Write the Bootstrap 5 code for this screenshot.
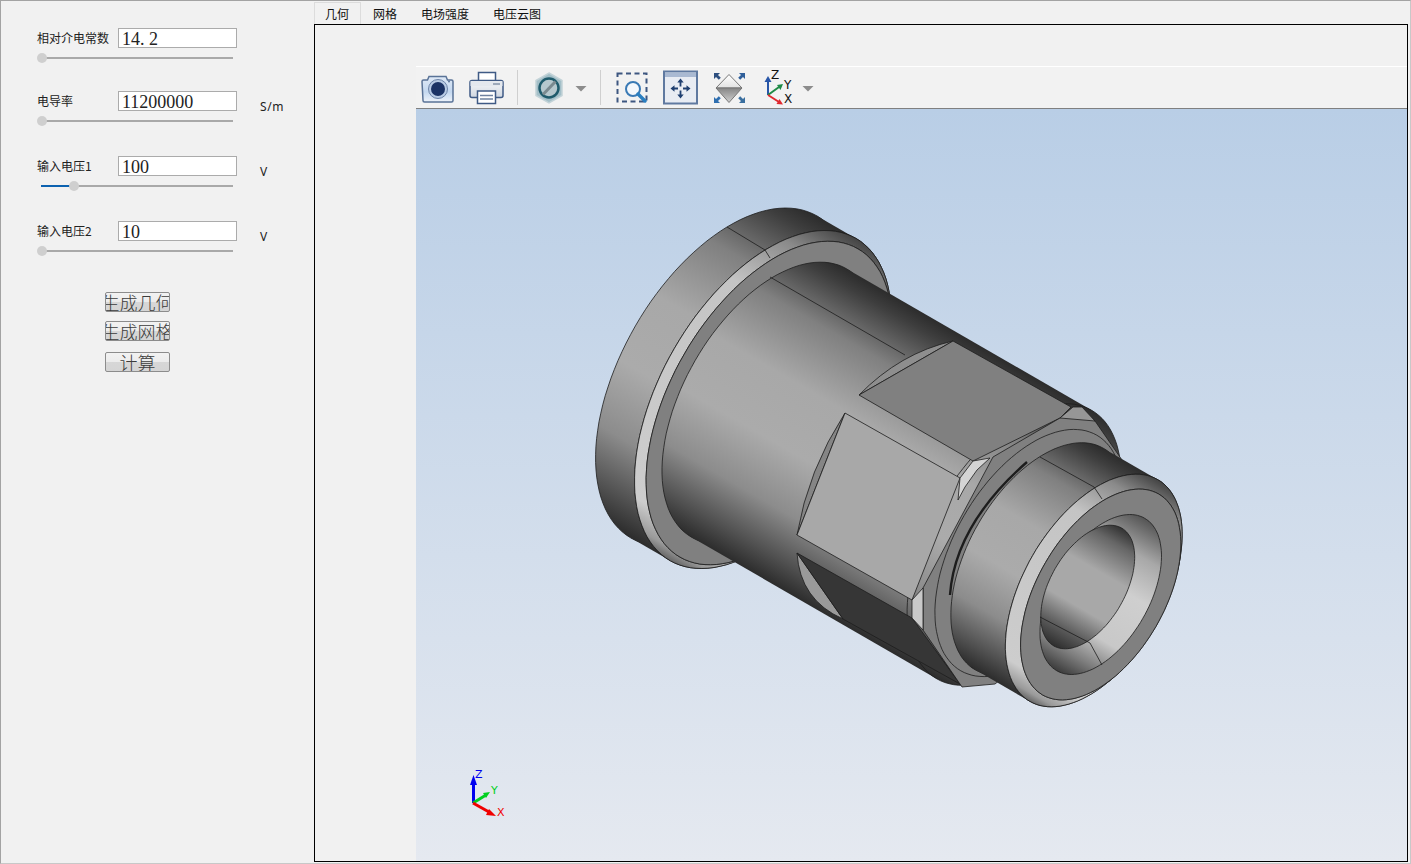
<!DOCTYPE html>
<html lang="zh">
<head>
  <meta charset="UTF-8" />
  <title>几何</title>
  <link href="https://cdn.jsdelivr.net/npm/bootstrap@5.3.3/dist/css/bootstrap.min.css" rel="stylesheet" />
  <style>
    html, body { height: 100%; }
    body { background: #f1f1f1; overflow: hidden; font-family: "Noto Sans CJK SC", "Liberation Sans", sans-serif; font-size: 12px; color: #222; }
    .app-frame { height: 864px; border: 1px solid #a3a3a3; border-bottom-color: #c8c8c8; border-right-color: #c8c8c8; }

    .side-panel { width: 313px; flex: none; padding: 27px 0 0 36px; }
    .param-group { width: 260px; height: 65px; }
    .param-group:first-child { height: 63px; }
    .param-row { height: 20px; }
    .param-label { width: 81px; flex: none; line-height: 20px; }
    .param-input.form-control { width: 119px; height: 20px; min-height: 0; flex: none; padding: 2px 3px 0; border: 1px solid #ababab; border-radius: 0; background: #fff; font-family: "Liberation Serif", serif; font-size: 18px; line-height: 18px; color: #222; }
    .param-unit { margin-left: 23px; padding-top: 9px; font-family: "Noto Sans", sans-serif; font-size: 12px; line-height: 14px; letter-spacing: .6px; }
    .param-slider { display: block; width: 196px; height: 10px; margin-top: 5px; padding: 0; appearance: none; -webkit-appearance: none; background: transparent; }
    .param-slider::-webkit-slider-runnable-track { height: 2px; background: linear-gradient(to right, transparent 4px, #0c62b0 4px, #0c62b0 var(--fill, 4px), #a9a9a9 var(--fill, 4px)); }
    .param-slider::-webkit-slider-thumb { appearance: none; -webkit-appearance: none; width: 10px; height: 10px; margin-top: -4px; border: 0; border-radius: 50%; background: #cfcfcf; box-shadow: none; }
    .action-list { width: 65px; margin: 6px 0 0 68px; }
    .action-btn.btn { display: block; width: 65px; height: 20px; padding: 0; overflow: hidden; white-space: nowrap; text-align: center; border: 1px solid #8c8c8c; border-radius: 2px; background: linear-gradient(#f2f2f2 0, #ececec 50%, #d7d7d7 50%, #d5d5d5 100%); font-family: "Noto Sans CJK SC", sans-serif; font-weight: 300; font-size: 18px; line-height: 17px; color: #3c3c3c; }
    .action-btn + .action-btn { margin-top: 9px; }
    .action-btn.btn.last-btn { margin-top: 11px; }
    .action-text { display: inline-block; margin-left: -5px; margin-right: -5px; }

    .tab-area { width: 1094px; flex: none; }
    .tab-strip.nav-tabs { height: 23px; flex-wrap: nowrap; border: 0; padding-top: 1px; }
    .tab-strip .nav-link { height: 22px; padding: 3px 12px 0; margin: 0; border: 0; border-radius: 0; background: transparent; color: #111; font-size: 12px; line-height: 18px; white-space: nowrap; }
    .tab-strip .nav-link.active { width: 47px; padding: 2px 0 0 10px; border: 1px solid #dcdcdc; border-bottom: 0; background: #f1f1f1; color: #111; }
    .tab-body { height: 838px; padding: 41px 0 0 101px; border: 1px solid #000; background: #f1f1f1; }

    .view-toolbar { height: 43px; padding-left: 4px; border-top: 1px solid #fff; border-bottom: 1px solid #808080; background: #f2f2f2; }
    .tb-btn { width: 36px; height: 36px; flex: none; }
    .tb-btn + .tb-btn { margin-left: 12px; }
    .tb-caret { width: 12px; height: 36px; flex: none; margin-left: 8px; }
    .tb-sep { width: 1px; height: 35px; flex: none; margin: 0 13px; background: #cfcfcf; }
    .view-canvas { height: 752px; background: linear-gradient(#b9cee6, #e5e9f0); }
    .view-canvas svg { display: block; }
    .axis-txt { font-family: "DejaVu Sans", sans-serif; font-size: 11px; }
    .axis-txt-lg { font-family: "DejaVu Sans", sans-serif; font-size: 12px; }
  </style>
</head>
<body>

<div class="app-frame d-flex">
  <aside class="side-panel">
    <div class="param-group">
      <div class="param-row d-flex">
        <label class="param-label">相对介电常数</label>
        <input class="param-input form-control" type="text" value="14. 2" />
      </div>
      <input class="param-slider" type="range" min="0" max="100" value="0" />
    </div>
    <div class="param-group">
      <div class="param-row d-flex">
        <label class="param-label">电导率</label>
        <input class="param-input form-control" type="text" value="11200000" />
        <span class="param-unit">S/m</span>
      </div>
      <input class="param-slider" type="range" min="0" max="100" value="0" />
    </div>
    <div class="param-group">
      <div class="param-row d-flex">
        <label class="param-label">输入电压1</label>
        <input class="param-input form-control" type="text" value="100" />
        <span class="param-unit">V</span>
      </div>
      <input class="param-slider" type="range" min="0" max="100" value="17" style="--fill: 33px" />
    </div>
    <div class="param-group">
      <div class="param-row d-flex">
        <label class="param-label">输入电压2</label>
        <input class="param-input form-control" type="text" value="10" />
        <span class="param-unit">V</span>
      </div>
      <input class="param-slider" type="range" min="0" max="100" value="0" />
    </div>
    <div class="action-list">
      <button class="action-btn btn" type="button"><span class="action-text">生成几何</span></button>
      <button class="action-btn btn" type="button"><span class="action-text">生成网格</span></button>
      <button class="action-btn btn last-btn" type="button"><span class="action-text">计算</span></button>
    </div>
  </aside>

  <main class="tab-area">
    <ul class="tab-strip nav nav-tabs">
      <li class="nav-item"><a class="nav-link active" href="#">几何</a></li>
      <li class="nav-item"><a class="nav-link" href="#">网格</a></li>
      <li class="nav-item"><a class="nav-link" href="#">电场强度</a></li>
      <li class="nav-item"><a class="nav-link" href="#">电压云图</a></li>
    </ul>
    <div class="tab-body">
      <div class="view-toolbar d-flex align-items-center">
        <!-- camera -->
        <svg class="tb-btn" viewBox="0 0 36 36">
          <defs>
            <linearGradient id="tbBlue" x1="0" y1="0" x2="0" y2="1"><stop offset="0" stop-color="#dfe9f6"/><stop offset=".6" stop-color="#c4d8f0"/><stop offset="1" stop-color="#eef3fa"/></linearGradient>
            <linearGradient id="tbGrey" x1="0" y1="0" x2="0" y2="1"><stop offset="0" stop-color="#f7f8fa"/><stop offset="1" stop-color="#cfd6e0"/></linearGradient>
          </defs>
          <path d="M2 11.500q0-1.500 1.500-1.500h4l1.500-3.500h17l1.500 3.500h4q1.500 0 1.500 1.500v19q0 1.500-1.500 1.500h-27q-1.500 0-1.500-1.500z" fill="url(#tbBlue)" stroke="#5a7397" stroke-width="1.500"/>
          <circle cx="18" cy="19" r="9.500" fill="#b9cbe4" stroke="#6d84a8"/>
          <circle cx="18" cy="19" r="7" fill="#1c3365"/>
          <circle cx="29" cy="11.500" r="1" fill="#5a7397"/>
        </svg>
        <!-- printer -->
        <svg class="tb-btn" viewBox="0 0 36 36">
          <rect x="10.500" y="2.500" width="17" height="9" fill="#fff" stroke="#3f5a85" stroke-width="1.500"/>
          <rect x="2" y="10.500" width="33" height="17" rx="2" fill="url(#tbGrey)" stroke="#3f5a85" stroke-width="1.500"/>
          <rect x="2.500" y="11" width="32" height="5" fill="#e4e8ee"/>
          <path d="M25 14h7" stroke="#8694a8" stroke-width="1.500"/>
          <rect x="9.500" y="21" width="18" height="12.500" fill="#fff" stroke="#3f5a85" stroke-width="1.500"/>
          <path d="M12 25.500h13M12 29h13" stroke="#6f82a0" stroke-width="1.500"/>
        </svg>
        <span class="tb-sep"></span>
        <!-- hide/show -->
        <svg class="tb-btn" viewBox="0 0 36 36">
          <path d="M18 3l13 7.500v15l-13 7.500-13-7.500v-15z" fill="#a3bfc8" stroke="#c3d3d8" stroke-width="1.500"/>
          <circle cx="18" cy="18" r="9.500" fill="#b6c8ce" stroke="#1f5b6c" stroke-width="2.500"/>
          <path d="M12 24.500l12.500-13" stroke="#7a8a90" stroke-width="3"/>
        </svg>
        <svg class="tb-caret" viewBox="0 0 12 36"><path d="M0.500 16h11l-5.500 5.500z" fill="#8c8c8c"/></svg>
        <span class="tb-sep"></span>
        <!-- zoom window -->
        <svg class="tb-btn" viewBox="0 0 36 36">
          <rect x="3.500" y="3.500" width="29" height="28" fill="none" stroke="#3d5680" stroke-width="2" stroke-dasharray="5 3.500"/>
          <circle cx="19" cy="19" r="7" fill="#f4f8fc" stroke="#3a7ab5" stroke-width="2"/>
          <path d="M24 24l7 7" stroke="#2a7fc0" stroke-width="3.500" stroke-linecap="round"/>
        </svg>
        <!-- pan -->
        <svg class="tb-btn" viewBox="0 0 36 36">
          <rect x="2" y="1.500" width="33" height="32" fill="#e8ecf3" stroke="#5f79a0" stroke-width="2"/>
          <rect x="3" y="2.500" width="31" height="4.500" fill="#a9b9d2"/>
          <g fill="#1f3f70" stroke="#1f3f70" stroke-width="1.800">
            <path d="M18.500 12v4.500M18.500 20.500v4.500M11.500 18.500h4.500M21 18.500h4.500" fill="none"/>
            <path d="M18.500 8.500l3.200 4h-6.400zM18.500 28.500l3.200-4h-6.400zM8.500 18.500l4-3.200v6.400zM28.500 18.500l-4-3.200v6.400z" stroke="none"/>
          </g>
        </svg>
        <!-- fit -->
        <svg class="tb-btn" viewBox="0 0 36 36">
          <defs>
            <linearGradient id="tbFit" x1="0" y1="0" x2="0" y2="1"><stop offset="0" stop-color="#868686"/><stop offset="1" stop-color="#d0d0d0"/></linearGradient>
            <linearGradient id="tbFitTop" x1="0" y1="0" x2="0" y2="1"><stop offset="0" stop-color="#ffffff"/><stop offset="1" stop-color="#e2e2e2"/></linearGradient>
          </defs>
          <path d="M19 4.500l13 13.500h-26z" fill="url(#tbFitTop)" stroke="#777"/>
          <path d="M6 18h26l-13 14.500z" fill="url(#tbFit)" stroke="#777"/>
          <path d="M4 3h6l-2 2 2.800 2.800-2 2-2.800-2.800-2 2z" fill="#2e4f7f"/>
          <path d="M35 3h-6l2 2-2.800 2.800 2 2 2.800-2.800 2 2z" fill="#2f5f9a"/>
          <path d="M4 33h6l-2-2 2.800-2.800-2-2-2.800 2.800-2-2z" fill="#2f6fb0"/>
          <path d="M35 33h-6l2-2-2.800-2.800 2-2 2.800 2.800 2-2z" fill="#3b6f9f"/>
        </svg>
        <!-- axis -->
        <svg class="tb-btn" viewBox="0 0 36 36">
          <path d="M10 25v-14" stroke="#2856a8" stroke-width="2"/><path d="M10 6l3.500 6h-7z" fill="#2856a8"/>
          <path d="M10 25l11-8" stroke="#1f8a45" stroke-width="2"/><path d="M25 14l-2.500 6-3.500-5z" fill="#1f8a45"/>
          <path d="M10 25l11 7" stroke="#e0282e" stroke-width="2"/><path d="M25 34.500l-6.500-.5 3-5z" fill="#e0282e"/>
          <text class="axis-txt-lg" x="13" y="9" fill="#111">Z</text>
          <text class="axis-txt-lg" x="26" y="19" fill="#111">Y</text>
          <text class="axis-txt-lg" x="26" y="33" fill="#111">X</text>
        </svg>
        <svg class="tb-caret" viewBox="0 0 12 36"><path d="M0.500 16h11l-5.500 5.500z" fill="#8c8c8c"/></svg>
      </div>
      <div class="view-canvas" id="viewCanvas"></div>
    </div>
  </main>
</div>

<script>
  // part is drawn back to front along its axis, t = distance from the rear flange face
  const U = [0.5, -0.866], D = [0.866, 0.5];
  const at = t => [724 + D[0] * t, 377 + D[1] * t];
  let defs = '', out = '';

  function grad(id, r, stops) {
    const c = at(0);
    const s = stops.map(p => `<stop offset="${p[0]}" stop-color="${p[1]}"/>`).join('');
    defs += `<linearGradient id="${id}" gradientUnits="userSpaceOnUse" x1="${c[0] + U[0] * r}" y1="${c[1] + U[1] * r}" x2="${c[0] - U[0] * r}" y2="${c[1] - U[1] * r}">${s}</linearGradient>`;
  }
  // ellipse as a polygon, a transform on it would turn the gradient too
  function ell(t, r, fill, sw = 0.8) {
    const c = at(t), pts = [];
    for (let i = 0; i < 120; i++) {
      const a = i / 120 * 2 * Math.PI, p = r * Math.cos(a), q = r * 0.55 * Math.sin(a);
      pts.push((c[0] + U[0] * p + D[0] * q).toFixed(1) + ',' + (c[1] + U[1] * p + D[1] * q).toFixed(1));
    }
    out += `<polygon points="${pts.join(' ')}" fill="${fill}" stroke="#1d1d1d" stroke-width="${sw}"/>`;
  }
  function cone(t1, r1, t2, r2, fill) {
    const a = at(t1), b = at(t2);
    ell(t1, r1, fill);
    const p = [[a, r1], [b, r2], [b, -r2], [a, -r1]].map(q => (q[0][0] + U[0] * q[1]) + ',' + (q[0][1] + U[1] * q[1]));
    out += `<polygon points="${p.join(' ')}" fill="${fill}"/>`;
    ell(t2, r2, fill);
  }
  function poly(pts, fill) {
    out += `<polygon points="${pts}" fill="${fill}" stroke="#1d1d1d" stroke-width="0.8" stroke-linejoin="round"/>`;
  }
  function path(d, fill) {
    out += `<path d="${d}" fill="${fill}" stroke="#1d1d1d" stroke-width="0.8"/>`;
  }

  const metal = [[0, '#2c2c2c'], [0.05, '#3e3e3e'], [0.2, '#808080'], [0.4, '#a8a8a8'], [0.6, '#ababab'], [0.78, '#8c8c8c'], [0.92, '#505050'], [1, '#2c2c2c']];
  const chamfer = [[0, '#444'], [0.1, '#8a8a8a'], [0.26, '#c4c4c4'], [0.9, '#cdcdcd'], [0.97, '#9a9a9a'], [1, '#666']];
  grad('gFlange', 186, metal);
  grad('gFlangeCh', 186, chamfer);
  grad('gBody', 155, metal);
  grad('gCollar', 128, metal);
  grad('gCollarCh', 128, chamfer);
  grad('gHoleCh', 88, [[0, '#555'], [0.2, '#a8a8a8'], [0.42, '#cfcfcf'], [0.72, '#c8c8c8'], [0.88, '#7c7c7c'], [1, '#3c3c3c']]);
  grad('gHole', 68, [[0, '#333'], [0.12, '#666'], [0.36, '#a8a8a8'], [0.66, '#a8a8a8'], [0.86, '#5a5a5a'], [1, '#2e2e2e']]);

  // rear flange
  cone(0, 186, 45, 186, 'url(#gFlange)');
  cone(45, 186, 52, 178, 'url(#gFlangeCh)');
  ell(52, 178, '#808080');

  // body and its seams
  cone(52, 155, 335, 155, 'url(#gBody)');
  path('M727 227L765 250L770 258', 'none');
  path('M770 277L905 355', 'none');

  // hex flats
  path('M859 395Q900 353 953 341Z', '#8e8e8e');
  poly('859,395 953,341 1071,407 1060,418 973,461', '#808080');
  path('M845 413Q808 470 797 535Z', '#858585');
  poly('845,413 960,478 912,600 797,535', '#a8a8a8');
  path('M797 553Q800 600 843 619Z', '#9a9a9a');
  poly('797,553 912,618 960,684 843,619', '#363636');

  // hex end face
  poly('1060,418 1073,407 1095,421 1122,460 1100,600 995,684 962,687 923,630 923,588 993,457', '#808080');
  poly('1060,418 1073,407 1082,407 1095,421', '#969696');
  poly('960,478 973,461 990,458 977,470 965,487 958,500', '#d4d4d4');
  poly('912,600 923,588 923,630 912,618', '#c9c9c9');
  ell(352, 136, '#808080');

  // front collar
  cone(364, 128, 427, 128, 'url(#gCollar)');
  out += `<path d="M950 595Q955 525 1027 462" fill="none" stroke="#1d1d1d" stroke-width="2.4"/>`;
  path('M1040 457L1094 487', 'none');

  // front face, bore
  cone(427, 128, 435, 116, 'url(#gCollarCh)');
  path('M1094 487L1102 499', 'none');
  ell(435, 116, '#808080');
  ell(435, 88, 'url(#gHoleCh)');
  ell(420, 68, 'url(#gHole)');
  path('M1040 617L1090 643L1102 665', 'none');

  // corner triad
  out += `<g stroke-width="3">
    <path d="M473.500 803v-22" stroke="#0000f0"/><path d="M473.500 775l3.500 10h-7z" fill="#0000f0"/>
    <path d="M473 803l13-8" stroke="#00d020"/><path d="M490 792l-4 6-3-5z" fill="#00d020"/>
    <path d="M473 803l16 9" stroke="#f00000"/><path d="M496 816l-10-1 3-6z" fill="#f00000"/>
    </g>
    <text class="axis-txt" x="475" y="778" fill="#0000f0">Z</text>
    <text class="axis-txt" x="491" y="794" fill="#00d020">Y</text>
    <text class="axis-txt" x="497" y="816" fill="#f00000">X</text>`;

  document.getElementById('viewCanvas').innerHTML =
    `<svg width="992" height="752" viewBox="416 109 992 752"><defs>${defs}</defs>${out}</svg>`;
</script>

<script src="https://cdn.jsdelivr.net/npm/bootstrap@5.3.3/dist/js/bootstrap.bundle.min.js"></script>
</body>
</html>
